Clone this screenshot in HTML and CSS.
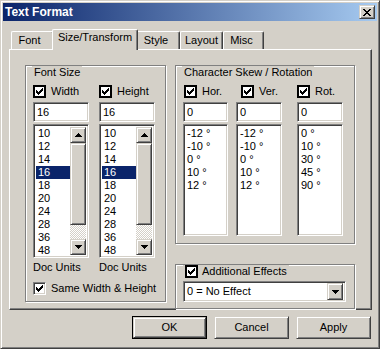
FILE: index.html
```html
<!DOCTYPE html>
<html lang="en">
<head>
    <meta charset="UTF-8">
    <title>Text Format</title>
    <link rel="stylesheet" href="styles.css">
</head>
<body>

    <div class="window">
        <div class="titlebar">
            <span class="title">Text Format</span>
            <div class="close raised">
                <svg width="8" height="7" viewBox="0 0 8 7"><path d="M0 0h2v1H0zM6 0h2v1H6zM1 1h2v1H1zM5 1h2v1H5zM2 2h4v1H2zM3 3h2v1H3zM2 4h4v1H2zM1 5h2v1H1zM5 5h2v1H5zM0 6h2v1H0zM6 6h2v1H6z"/></svg>
            </div>
        </div>

        <div class="content">
            <div class="tabs">
                <div class="tab tab-font">Font</div>
                <div class="tab tab-size active">Size/Transform</div>
                <div class="tab tab-style">Style</div>
                <div class="tab tab-layout">Layout</div>
                <div class="tab tab-misc">Misc</div>
            </div>

            <div class="panel">
                <!-- font size -->
                <div class="group group-size">
                    <div class="legend">Font Size</div>
                    <div class="size-cols">
                        <div class="col">
                            <div class="check-row"><span class="check flat"><svg width="7" height="7" viewBox="0 0 7 7"><path d="M0 2h1v3H0zM1 3h1v3H1zM2 4h1v3H2zM3 3h1v3H3zM4 2h1v3H4zM5 1h1v3H5zM6 0h1v3H6z"/></svg></span>Width</div>
                            <div class="edit sunken">16</div>
                            <div class="list sunken size-list">
                                <div class="items">
                                    <div>10</div><div>12</div><div>14</div><div class="sel">16</div><div>18</div>
                                    <div>20</div><div>24</div><div>28</div><div>36</div><div>48</div>
                                </div>
                                <div class="scrollbar">
                                    <div class="sbtn raised"><svg width="7" height="4" viewBox="0 0 7 4"><path d="M3 0h1v1H3zM2 1h3v1H2zM1 2h5v1H1zM0 3h7v1H0z"/></svg></div>
                                    <div class="thumb raised"></div>
                                    <div class="track"></div>
                                    <div class="sbtn raised"><svg width="7" height="4" viewBox="0 0 7 4"><path d="M0 0h7v1H0zM1 1h5v1H1zM2 2h3v1H2zM3 3h1v1H3z"/></svg></div>
                                </div>
                            </div>
                            <div class="units">Doc Units</div>
                        </div>
                        <div class="col">
                            <div class="check-row"><span class="check flat"><svg width="7" height="7" viewBox="0 0 7 7"><path d="M0 2h1v3H0zM1 3h1v3H1zM2 4h1v3H2zM3 3h1v3H3zM4 2h1v3H4zM5 1h1v3H5zM6 0h1v3H6z"/></svg></span>Height</div>
                            <div class="edit sunken">16</div>
                            <div class="list sunken size-list">
                                <div class="items">
                                    <div>10</div><div>12</div><div>14</div><div class="sel">16</div><div>18</div>
                                    <div>20</div><div>24</div><div>28</div><div>36</div><div>48</div>
                                </div>
                                <div class="scrollbar">
                                    <div class="sbtn raised"><svg width="7" height="4" viewBox="0 0 7 4"><path d="M3 0h1v1H3zM2 1h3v1H2zM1 2h5v1H1zM0 3h7v1H0z"/></svg></div>
                                    <div class="thumb raised"></div>
                                    <div class="track"></div>
                                    <div class="sbtn raised"><svg width="7" height="4" viewBox="0 0 7 4"><path d="M0 0h7v1H0zM1 1h5v1H1zM2 2h3v1H2zM3 3h1v1H3z"/></svg></div>
                                </div>
                            </div>
                            <div class="units">Doc Units</div>
                        </div>
                    </div>
                    <div class="check-row same"><span class="check sunken-box"><svg width="7" height="7" viewBox="0 0 7 7"><path d="M0 2h1v3H0zM1 3h1v3H1zM2 4h1v3H2zM3 3h1v3H3zM4 2h1v3H4zM5 1h1v3H5zM6 0h1v3H6z"/></svg></span>Same Width &amp; Height</div>
                </div>

                <div class="right-col">
                    <!-- skew / rotation -->
                    <div class="group group-skew">
                        <div class="legend">Character Skew / Rotation</div>
                        <div class="skew-cols">
                            <div class="col col-hor">
                                <div class="check-row"><span class="check flat"><svg width="7" height="7" viewBox="0 0 7 7"><path d="M0 2h1v3H0zM1 3h1v3H1zM2 4h1v3H2zM3 3h1v3H3zM4 2h1v3H4zM5 1h1v3H5zM6 0h1v3H6z"/></svg></span>Hor.</div>
                                <div class="edit sunken">0</div>
                                <div class="list sunken skew-list">
                                    <div class="items">
                                        <div>-12 °</div><div>-10 °</div><div>0 °</div><div>10 °</div><div>12 °</div>
                                    </div>
                                </div>
                            </div>
                            <div class="col col-ver">
                                <div class="check-row"><span class="check flat"><svg width="7" height="7" viewBox="0 0 7 7"><path d="M0 2h1v3H0zM1 3h1v3H1zM2 4h1v3H2zM3 3h1v3H3zM4 2h1v3H4zM5 1h1v3H5zM6 0h1v3H6z"/></svg></span>Ver.</div>
                                <div class="edit sunken">0</div>
                                <div class="list sunken skew-list">
                                    <div class="items">
                                        <div>-12 °</div><div>-10 °</div><div>0 °</div><div>10 °</div><div>12 °</div>
                                    </div>
                                </div>
                            </div>
                            <div class="col col-rot">
                                <div class="check-row"><span class="check flat"><svg width="7" height="7" viewBox="0 0 7 7"><path d="M0 2h1v3H0zM1 3h1v3H1zM2 4h1v3H2zM3 3h1v3H3zM4 2h1v3H4zM5 1h1v3H5zM6 0h1v3H6z"/></svg></span>Rot.</div>
                                <div class="edit sunken">0</div>
                                <div class="list sunken skew-list">
                                    <div class="items">
                                        <div>0 °</div><div>10 °</div><div>30 °</div><div>45 °</div><div>90 °</div>
                                    </div>
                                </div>
                            </div>
                        </div>
                    </div>

                    <!-- effects -->
                    <div class="group group-effects">
                        <div class="legend legend-check"><span class="check flat"><svg width="7" height="7" viewBox="0 0 7 7"><path d="M0 2h1v3H0zM1 3h1v3H1zM2 4h1v3H2zM3 3h1v3H3zM4 2h1v3H4zM5 1h1v3H5zM6 0h1v3H6z"/></svg></span>Additional Effects</div>
                        <div class="combo sunken">
                            <span class="combo-text">0 = No Effect</span>
                            <div class="sbtn raised"><svg width="7" height="4" viewBox="0 0 7 4"><path d="M0 0h7v1H0zM1 1h5v1H1zM2 2h3v1H2zM3 3h1v1H3z"/></svg></div>
                        </div>
                    </div>
                </div>
            </div>

            <div class="buttons">
                <div class="btn default"><div class="btn-face raised">OK</div></div>
                <div class="btn"><div class="btn-face raised">Cancel</div></div>
                <div class="btn"><div class="btn-face raised">Apply</div></div>
            </div>
        </div>
    </div>

</body>
</html>
```

FILE: styles.css
```css
body {
    margin: 0;
    padding: 0;
    background-color: #d4d0c8;
    font-family: 'Liberation Sans', Arial, sans-serif;
    font-size: 11px;
    line-height: 13px;
    color: #000;
}

svg {
    display: block;
    shape-rendering: crispEdges;
}

/* 3d edges */
.raised {
    box-sizing: border-box;
    background-color: #d4d0c8;
    border: 1px solid;
    border-color: #d4d0c8 #404040 #404040 #d4d0c8;
    box-shadow: inset 1px 1px #fff, inset -1px -1px #808080;
}

.sunken {
    box-sizing: border-box;
    background-color: #fff;
    border: 1px solid;
    border-color: #808080 #fff #fff #808080;
    box-shadow: inset 1px 1px #404040, inset -1px -1px #d4d0c8;
}

.window {
    width: 380px;
    height: 349px;
    box-sizing: border-box;
    border: 1px solid;
    border-color: #d4d0c8 #404040 #404040 #d4d0c8;
    box-shadow: inset 1px 1px #fff, inset -1px -1px #808080;
    padding: 2px;
}

.titlebar {
    height: 18px;
    display: flex;
    align-items: center;
    justify-content: space-between;
    background: linear-gradient(to right, #0a246a, #a6caf0);
}

.title {
    color: #fff;
    font-weight: bold;
    font-size: 12px;
    line-height: 18px;
    padding-left: 2px;
}

.close {
    width: 16px;
    height: 14px;
    margin-right: 2px;
    display: flex;
    align-items: center;
    justify-content: center;
}

.content {
    padding: 8px 0 0 6px;
}

/* tabs */
.tabs {
    display: flex;
    align-items: flex-end;
    height: 20px;
    padding-left: 2px;
}

.tab {
    box-sizing: border-box;
    height: 18px;
    padding-top: 2px;
    text-align: center;
    border-top: 1px solid #fff;
    border-left: 1px solid #fff;
    border-right: 1px solid #404040;
    border-radius: 2px 2px 0 0;
    box-shadow: inset -1px 0 #808080;
}

.tab.active {
    height: 21px;
    margin: 0 -2px -1px;
    padding-top: 1px;
    background-color: #d4d0c8;
    position: relative;
    z-index: 1;
}

.tab-font { width: 43px; padding-right: 6px; }
.tab-size { width: 82px; }
.tab-size.active { width: 86px; }
.tab-style { width: 44px; padding-right: 4px; }
.tab-layout { width: 43px; }
.tab-misc { width: 41px; padding-right: 4px; }

.panel {
    box-sizing: border-box;
    width: 363px;
    height: 261px;
    border: 1px solid;
    border-color: #fff #404040 #404040 #fff;
    box-shadow: inset -1px -1px #808080;
    padding: 15px 0 0 15px;
    display: flex;
    align-items: flex-start;
    gap: 9px;
}

/* group boxes */
.group {
    box-sizing: border-box;
    border: 1px solid #808080;
    box-shadow: inset 1px 1px #fff, 1px 1px #fff;
}

.legend {
    display: inline-flex;
    align-items: center;
    background-color: #d4d0c8;
    margin: -5px 0 0 6px;
    padding: 0 2px;
    height: 13px;
}

.legend-check {
    margin: -7px 0 0 7px;
    gap: 4px;
}

.group-size {
    width: 141px;
    padding-bottom: 6px;
}

.size-cols {
    display: flex;
    gap: 10px;
    padding-left: 7px;
}

.col {
    display: flex;
    flex-direction: column;
}

.size-cols .col {
    width: 56px;
}

.check-row {
    display: flex;
    align-items: center;
    gap: 5px;
    height: 13px;
    margin-top: 6px;
    white-space: nowrap;
}

.check {
    box-sizing: border-box;
    width: 13px;
    height: 13px;
    flex: none;
    background-color: #fff;
    display: flex;
    align-items: center;
    justify-content: center;
}

.check.flat {
    border: 2px solid #000;
}

.check.sunken-box {
    border: 1px solid;
    border-color: #808080 #fff #fff #808080;
    box-shadow: inset 1px 1px #404040, inset -1px -1px #d4d0c8;
}

.check-row.same {
    margin: 8px 0 0 7px;
}

.edit {
    height: 20px;
    margin-top: 4px;
    padding: 3px 0 0 3px;
}

.list {
    margin-top: 2px;
    display: flex;
    padding: 2px;
    overflow: hidden;
}

.items {
    flex: 1;
}

.items div {
    height: 13px;
    padding-left: 2px;
    white-space: nowrap;
}

.items .sel {
    background-color: #0a246a;
    color: #fff;
}

.size-list {
    height: 134px;
}

.skew-list {
    height: 112px;
}

.skew-list .items div {
    padding-left: 1px;
}

.scrollbar {
    width: 16px;
    display: flex;
    flex-direction: column;
}

.sbtn {
    width: 16px;
    height: 16px;
    flex: none;
    display: flex;
    align-items: center;
    justify-content: center;
}

.thumb {
    height: 82px;
}

.track {
    flex: 1;
    background: repeating-conic-gradient(#fff 0 25%, #d4d0c8 0 50%) 0 0 / 2px 2px;
}

.units {
    margin-top: 3px;
    white-space: nowrap;
}

/* right side */
.right-col {
    display: flex;
    flex-direction: column;
    gap: 20px;
}

.group-skew {
    width: 180px;
    padding-bottom: 7px;
}

.skew-cols {
    display: flex;
    padding-left: 7px;
}

.col-hor { width: 45px; }
.col-ver { width: 46px; margin-left: 8px; }
.col-rot { width: 46px; margin-left: 15px; }

.col-hor .check-row { margin-left: 1px; }
.col-ver .check-row { margin-left: 5px; }

.group-effects {
    width: 180px;
    padding-bottom: 6px;
}

.combo {
    height: 21px;
    width: 163px;
    margin: 3px 0 0 7px;
    display: flex;
    align-items: center;
    justify-content: space-between;
    padding: 2px;
}

.combo-text {
    padding-left: 1px;
}

.combo .sbtn {
    height: 17px;
}

/* bottom buttons */
.buttons {
    width: 363px;
    display: flex;
    justify-content: flex-end;
    gap: 7px;
    margin-top: 6px;
    padding-right: 1px;
    box-sizing: border-box;
}

.btn {
    width: 75px;
    height: 23px;
    box-sizing: border-box;
    display: flex;
}

.btn.default {
    border: 1px solid #000;
}

.btn-face {
    flex: 1;
    display: flex;
    align-items: center;
    justify-content: center;
}
```
